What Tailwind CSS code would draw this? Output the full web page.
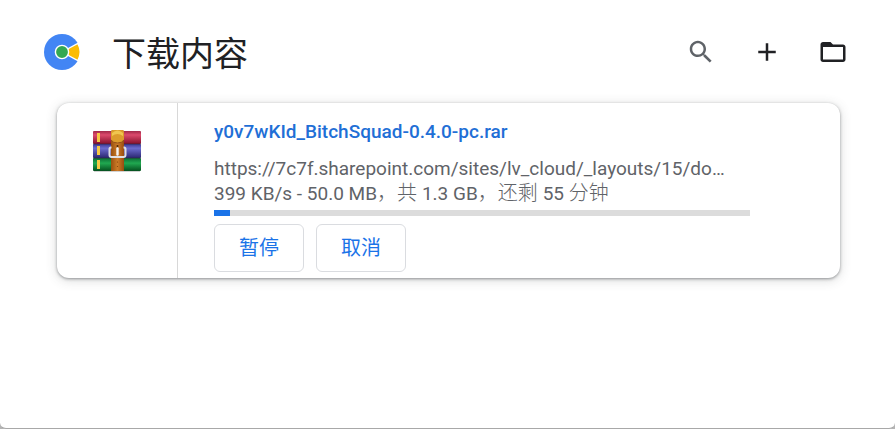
<!DOCTYPE html>
<html lang="zh-CN">

<head>
    <meta charset="UTF-8">
    <meta name="viewport" content="width=device-width, initial-scale=1.0">
    <title>下载内容</title>
    <script src="https://cdn.jsdelivr.net/npm/@tailwindcss/browser@4"></script>
</head>

<body class="bg-[#b4b4b4] font-[Roboto,'Noto_Sans_CJK_SC',sans-serif]">
    <div class="min-h-screen border-b border-[#a8a8a8] rounded-b-md bg-white">
        <header class="flex items-center h-[103px] pl-11 pr-[47px]">
            <svg class="size-9" viewBox="0 0 36 36" aria-hidden="true">
                <circle cx="18" cy="18" r="18" fill="#4285f4" />
                <path d="M18 18 L33.8 9.4 A18 18 0 0 1 33.8 26.6 Z" fill="#fbbc04" stroke="#fff" stroke-width="1.2" />
                <circle cx="18" cy="18" r="6.6" fill="#34a853" stroke="#fff" stroke-width="1.4" />
            </svg>
            <h1 class="ml-8 pt-1 text-[34px] leading-10 text-[#202124]">下载内容</h1>
            <div class="flex items-center gap-8 ml-auto">
                <button type="button" aria-label="搜索" class="cursor-pointer text-[#5f6368]">
                    <svg class="size-[30px]" viewBox="0 0 24 24" fill="currentColor">
                        <path d="M15.5 14h-.79l-.28-.27C15.41 12.59 16 11.11 16 9.5 16 5.91 13.09 3 9.5 3S3 5.91 3 9.5 5.91 16 9.5 16c1.61 0 3.09-.59 4.23-1.57l.27.28v.79l5 4.99L20.49 19l-4.99-5zm-6 0C7.01 14 5 11.99 5 9.5S7.01 5 9.5 5 14 7.01 14 9.5 11.99 14 9.5 14z" />
                    </svg>
                </button>
                <button type="button" aria-label="新建下载" class="cursor-pointer px-1 text-[#202124]">
                    <svg class="size-[30px]" viewBox="0 0 24 24" fill="currentColor">
                        <path d="M19 13h-6v6h-2v-6H5v-2h6V5h2v6h6v2z" />
                    </svg>
                </button>
                <button type="button" aria-label="打开文件夹" class="cursor-pointer text-[#202124]">
                    <svg class="size-[30px]" viewBox="0 0 24 24" fill="currentColor">
                        <path d="M10 4H4c-1.1 0-1.99.9-1.99 2L2 18c0 1.1.9 2 2 2h16c1.1 0 2-.9 2-2V8c0-1.1-.9-2-2-2h-8l-2-2zM4 8h16v10H4z" fill-rule="evenodd" />
                    </svg>
                </button>
            </div>
        </header>

        <main class="pl-[57px] pr-[55px]">
            <article class="flex rounded-xl bg-white shadow-[0_1px_3px_rgba(60,64,67,0.5),0_2px_12px_rgba(60,64,67,0.2)]">
                <div class="w-[121px] shrink-0 border-r border-[#d8d8d8] pt-6 pl-9">
                    <svg class="size-12" viewBox="0 0 48 48" aria-hidden="true">
                        <defs>
                            <linearGradient id="red" x2="0" y2="1">
                                <stop offset="0" stop-color="#a02848" />
                                <stop offset=".3" stop-color="#dc4a6c" />
                                <stop offset="1" stop-color="#85102c" />
                            </linearGradient>
                            <linearGradient id="blue" x2="0" y2="1">
                                <stop offset="0" stop-color="#3c3890" />
                                <stop offset=".3" stop-color="#6c6cd0" />
                                <stop offset="1" stop-color="#2a2670" />
                            </linearGradient>
                            <linearGradient id="green" x2="0" y2="1">
                                <stop offset="0" stop-color="#0c6c34" />
                                <stop offset=".4" stop-color="#20a850" />
                                <stop offset="1" stop-color="#05501f" />
                            </linearGradient>
                            <linearGradient id="strap">
                                <stop offset="0" stop-color="#98500f" />
                                <stop offset=".5" stop-color="#cc7c28" />
                                <stop offset="1" stop-color="#984c10" />
                            </linearGradient>
                        </defs>
                        <rect x="1" y="43" width="46" height="2" fill="#d2d2d2" />
                        <rect y="4" width="48" height="13" rx="1" fill="url(#red)" />
                        <rect y="17" width="48" height="14" rx="1" fill="url(#blue)" />
                        <rect y="31" width="48" height="13" rx="1" fill="url(#green)" />
                        <path d="M0 17h48M0 31h48" stroke="#30283f" stroke-width=".6" />
                        <path d="M4 6h3v9H4zM4 19h3v9H4zM4 33h3v9H4z" fill="#f6c944" />
                        <path d="M18 5q0-2 2-2h9q2 0 2 2v39H18z" fill="url(#strap)" />
                        <path d="M18 5q0-2 2-2h9q2 0 2 2v8q-2 3-6.500 3T18 13z" fill="#dc9c2c" />
                        <path d="M19 6q5.500-5 11 0v3q-5.500-4-11 0z" fill="#f0c650" />
                        <path d="M18 13q2 3 6.500 3t6.500-3" fill="none" stroke="#94501a" />
                        <circle cx="24.500" cy="19" r="1" fill="#4b2507" />
                        <path d="M18.500 20.500H18q-1.500 0-1.500 1.500v6q0 2 2 2h12q2 0 2-2v-6q0-1.500-1.500-1.500h-.5" fill="none" stroke="#e0e0e4" stroke-width="2" />
                        <path d="M24.500 21.500v6" stroke="#f4f4f4" stroke-width="2.400" stroke-linecap="round" />
                        <circle cx="24.500" cy="35" r=".6" fill="#7c420c" />
                        <circle cx="24.500" cy="39.500" r=".6" fill="#7c420c" />
                    </svg>
                </div>

                <div class="min-w-0 grow pt-4 pr-[90px] pb-[6px] pl-9 text-[19px] leading-6 text-[#5f6368]">
                    <a href="#" class="block truncate font-medium leading-[26px] text-[#1f6fd6]">y0v7wKId_BitchSquad-0.4.0-pc.rar</a>
                    <p class="mt-3 truncate">https://7c7f.sharepoint.com/sites/lv_cloud/_layouts/15/do…</p>
                    <p class="text-xl leading-6 font-light"><span class="text-[19px] font-normal">399 KB/s - 50.0 MB</span>，共 <span class="text-[19px] font-normal">1.3 GB</span>，还剩 <span class="text-[19px] font-normal">55</span> 分钟</p>
                    <div role="progressbar" aria-label="下载进度" aria-valuenow="3" aria-valuemin="0" aria-valuemax="100" class="mt-1 h-[6px] bg-[#dcdcdc]">
                        <div class="h-full bg-[#1a73e8]" style="width: 3%"></div>
                    </div>
                    <div class="flex gap-3 mt-2 text-xl">
                        <button type="button" class="w-[90px] h-12 rounded-md border border-[#dadce0] cursor-pointer text-[#1a73e8]">暂停</button>
                        <button type="button" class="w-[90px] h-12 rounded-md border border-[#dadce0] cursor-pointer text-[#1a73e8]">取消</button>
                    </div>
                </div>
            </article>
        </main>
    </div>
</body>

</html>
